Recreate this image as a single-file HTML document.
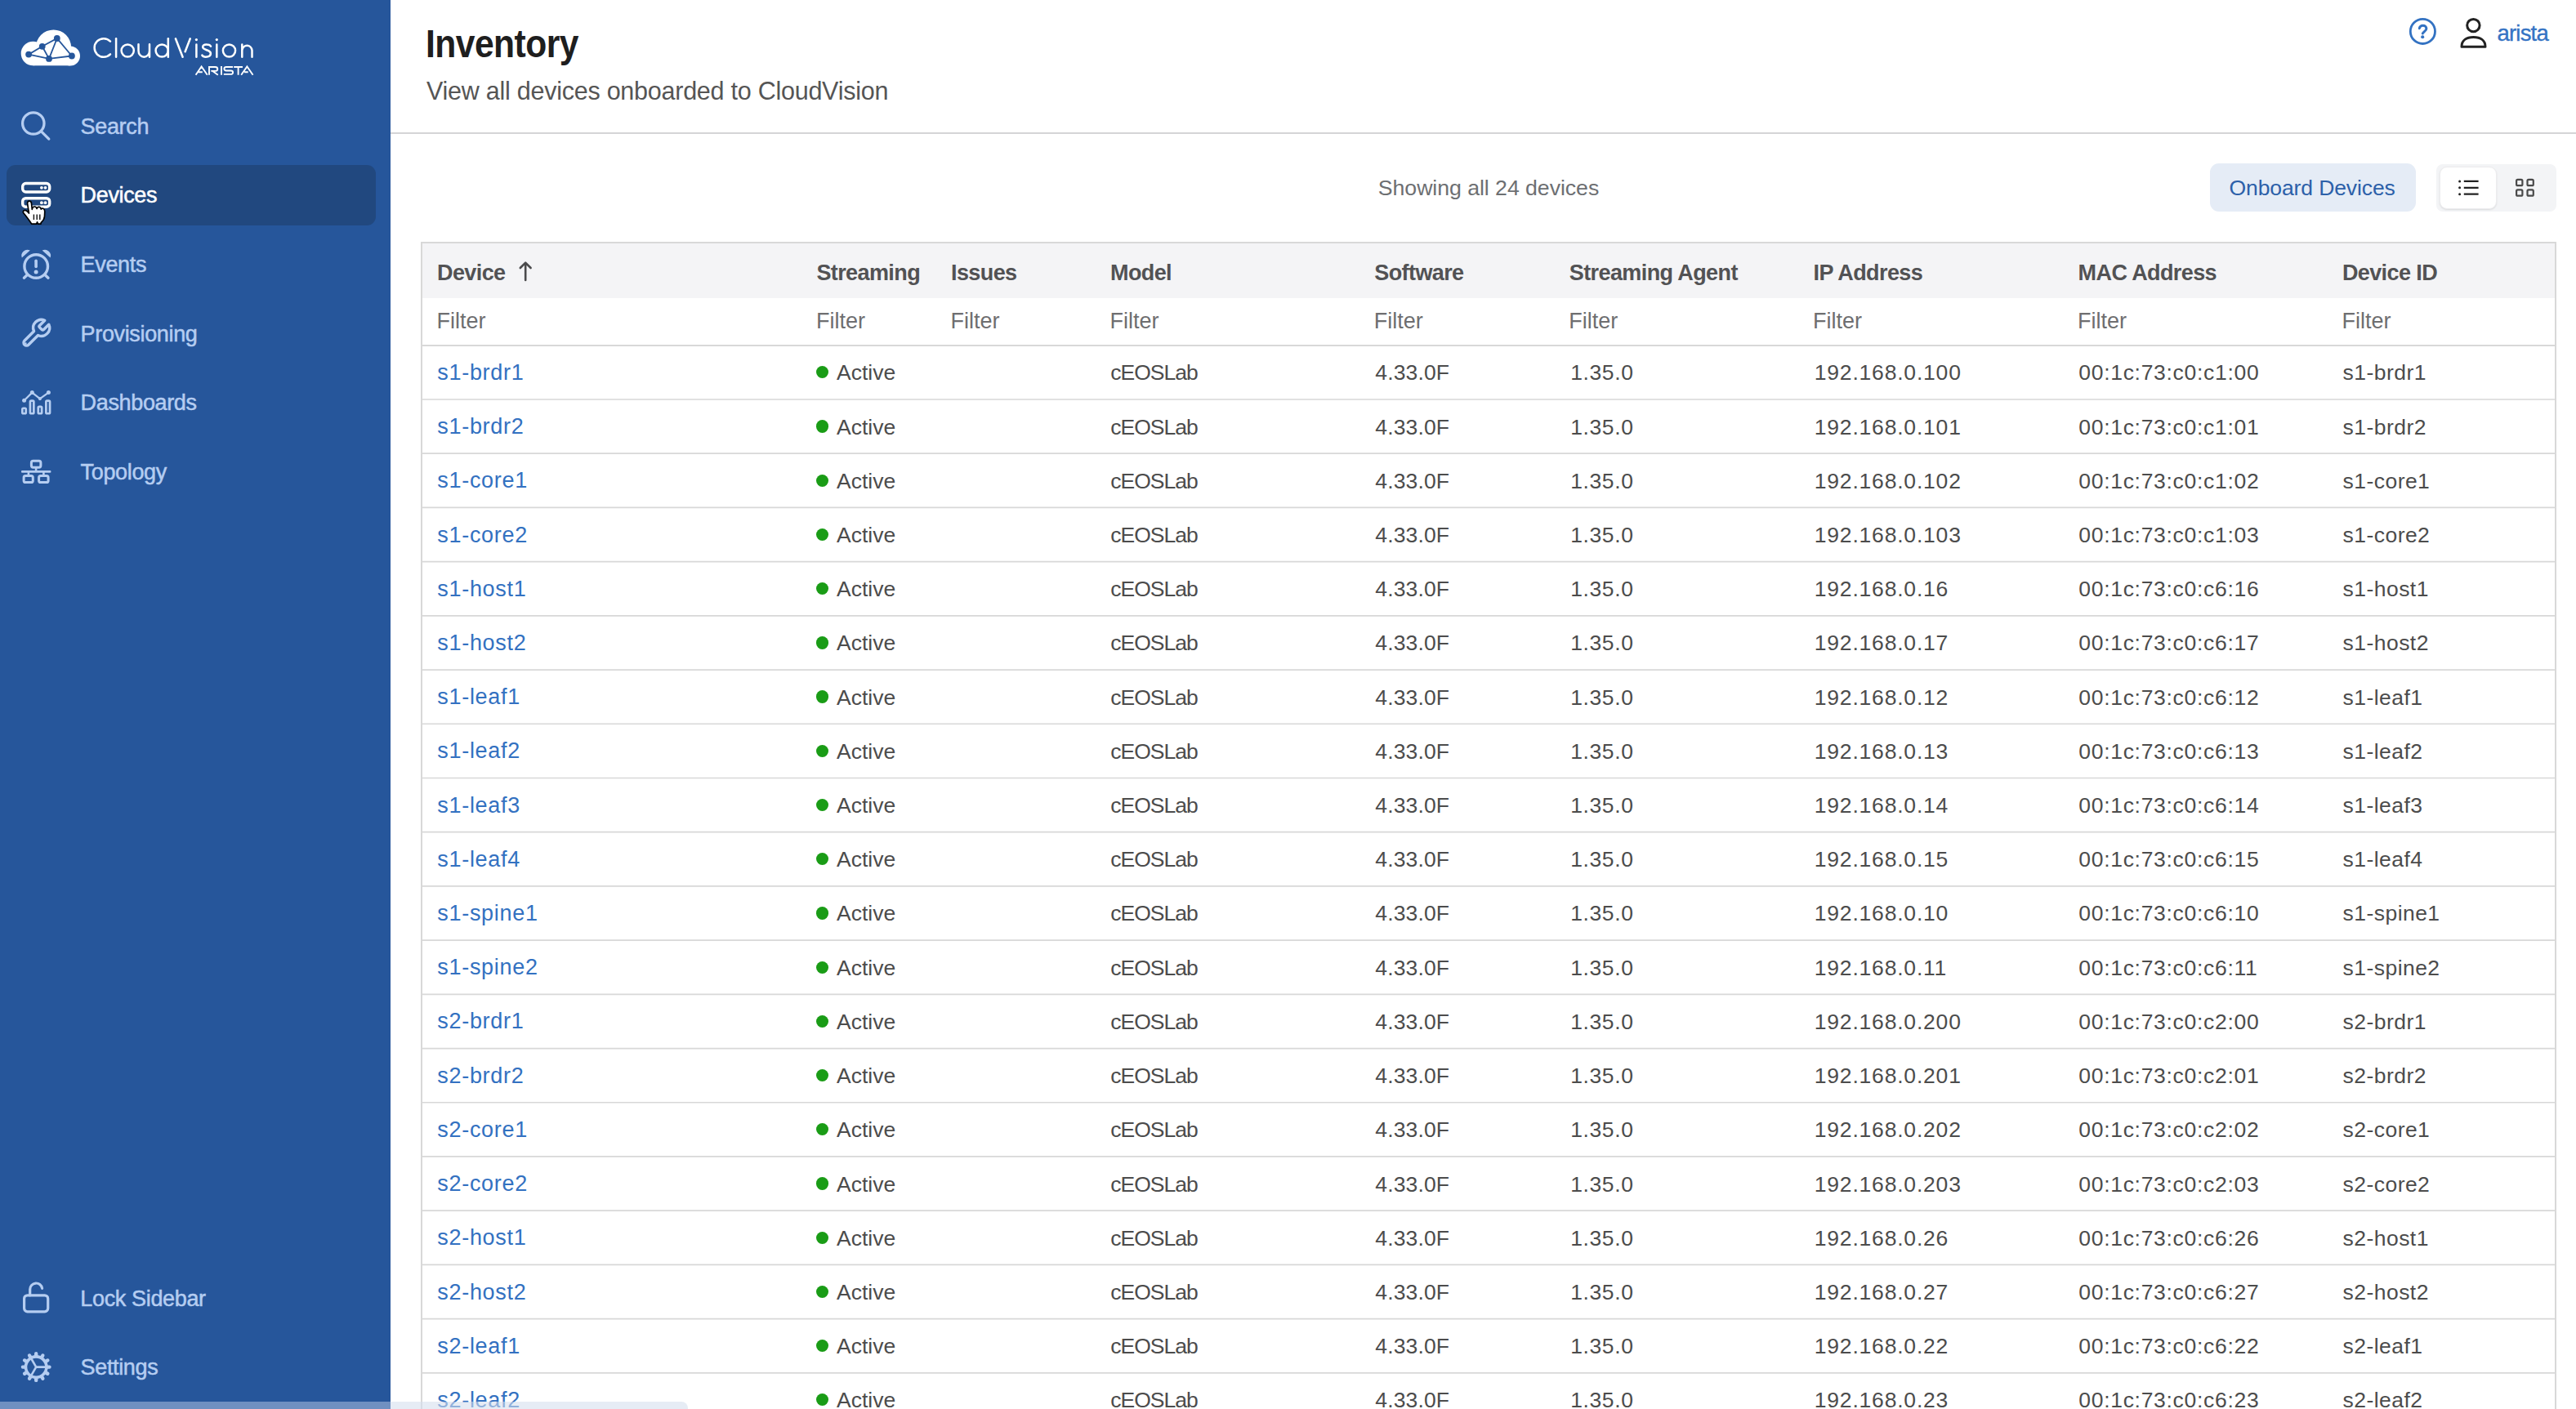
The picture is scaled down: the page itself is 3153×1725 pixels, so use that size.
<!DOCTYPE html><html><head><meta charset="utf-8"><title>Inventory</title><style>
html,body{margin:0;padding:0;width:3153px;height:1725px;overflow:hidden;background:#fff;font-family:"Liberation Sans",sans-serif;}
.a{position:absolute;white-space:nowrap;line-height:1;}
.r{position:absolute;}
svg{position:absolute;overflow:visible;}
</style></head><body>
<div class="r" style="left:0;top:0;width:478px;height:1725px;background:#26569b"></div>
<div class="r" style="left:7.5px;top:202px;width:452.5px;height:74px;border-radius:11px;background:#21487f"></div>
<div class="a" style="left:98.60px;top:142.04px;font-size:27px;color:#b5cdf1;letter-spacing:-0.35px;-webkit-text-stroke:0.5px #b5cdf1;">Search</div>
<div class="a" style="left:98.60px;top:226.34px;font-size:27px;color:#ffffff;letter-spacing:-0.35px;-webkit-text-stroke:0.5px #ffffff;">Devices</div>
<div class="a" style="left:98.60px;top:310.94px;font-size:27px;color:#b5cdf1;letter-spacing:-0.35px;-webkit-text-stroke:0.5px #b5cdf1;">Events</div>
<div class="a" style="left:98.60px;top:396.04px;font-size:27px;color:#b5cdf1;letter-spacing:-0.35px;-webkit-text-stroke:0.5px #b5cdf1;">Provisioning</div>
<div class="a" style="left:98.60px;top:479.94px;font-size:27px;color:#b5cdf1;letter-spacing:-0.35px;-webkit-text-stroke:0.5px #b5cdf1;">Dashboards</div>
<div class="a" style="left:98.60px;top:565.14px;font-size:27px;color:#b5cdf1;letter-spacing:-0.35px;-webkit-text-stroke:0.5px #b5cdf1;">Topology</div>
<div class="a" style="left:98.30px;top:1576.94px;font-size:27px;color:#b5cdf1;letter-spacing:-0.35px;-webkit-text-stroke:0.5px #b5cdf1;">Lock Sidebar</div>
<div class="a" style="left:98.60px;top:1660.94px;font-size:27px;color:#b5cdf1;letter-spacing:-0.35px;-webkit-text-stroke:0.5px #b5cdf1;">Settings</div>
<div class="a" style="left:520.50px;top:30.09px;font-size:47.5px;color:#1e1e1e;font-weight:700;letter-spacing:-0.6px;transform:scaleX(0.897);transform-origin:0 0;">Inventory</div>
<div class="a" style="left:522.00px;top:95.78px;font-size:30.5px;color:#555555;letter-spacing:-0.25px;">View all devices onboarded to CloudVision</div>
<div class="r" style="left:478px;top:162px;width:2675px;height:1.5px;background:#d4d4d6"></div>
<div class="a" style="left:3056.50px;top:27.02px;font-size:27.5px;color:#3473c4;letter-spacing:-0.8px;-webkit-text-stroke:0.35px #3473c4;">arista</div>
<div class="a" style="left:1686.80px;top:217.20px;font-size:26.7px;color:#6d6f72;letter-spacing:-0.05px;">Showing all 24 devices</div>
<div class="r" style="left:2704.5px;top:200px;width:252px;height:59px;border-radius:11px;background:#e5ecf6"></div>
<div class="a" style="left:2728.50px;top:216.87px;font-size:26.5px;color:#2c60a9;letter-spacing:-0.1px;">Onboard Devices</div>
<div class="r" style="left:2982px;top:201px;width:146.5px;height:58px;border-radius:8px;background:#f3f4f6"></div>
<div class="r" style="left:2985.5px;top:203.5px;width:70px;height:52px;border-radius:9px;background:#fff;box-sizing:border-box;border:1px solid #ececee;box-shadow:0 1px 2px rgba(0,0,0,0.10)"></div>
<div class="r" style="left:515px;top:296px;width:2614px;height:1439px;border:2px solid #d8d8d8;box-sizing:border-box;border-bottom:none"></div>
<div class="r" style="left:517px;top:298px;width:2610px;height:66.60000000000002px;background:#f4f4f6"></div>
<div class="a" style="left:535.00px;top:320.74px;font-size:27px;color:#525254;font-weight:700;letter-spacing:-0.6px;">Device</div>
<div class="a" style="left:999.40px;top:320.74px;font-size:27px;color:#525254;font-weight:700;letter-spacing:-0.6px;">Streaming</div>
<div class="a" style="left:1164.00px;top:320.74px;font-size:27px;color:#525254;font-weight:700;letter-spacing:-0.6px;">Issues</div>
<div class="a" style="left:1359.00px;top:320.74px;font-size:27px;color:#525254;font-weight:700;letter-spacing:-0.6px;">Model</div>
<div class="a" style="left:1682.30px;top:320.74px;font-size:27px;color:#525254;font-weight:700;letter-spacing:-0.6px;">Software</div>
<div class="a" style="left:1920.80px;top:320.74px;font-size:27px;color:#525254;font-weight:700;letter-spacing:-0.6px;">Streaming Agent</div>
<div class="a" style="left:2219.60px;top:320.74px;font-size:27px;color:#525254;font-weight:700;letter-spacing:-0.6px;">IP Address</div>
<div class="a" style="left:2543.60px;top:320.74px;font-size:27px;color:#525254;font-weight:700;letter-spacing:-0.6px;">MAC Address</div>
<div class="a" style="left:2866.90px;top:320.74px;font-size:27px;color:#525254;font-weight:700;letter-spacing:-0.6px;">Device ID</div>
<div class="a" style="left:534.50px;top:380.44px;font-size:27px;color:#6e6e70;">Filter</div>
<div class="a" style="left:998.90px;top:380.44px;font-size:27px;color:#6e6e70;">Filter</div>
<div class="a" style="left:1163.50px;top:380.44px;font-size:27px;color:#6e6e70;">Filter</div>
<div class="a" style="left:1358.50px;top:380.44px;font-size:27px;color:#6e6e70;">Filter</div>
<div class="a" style="left:1681.80px;top:380.44px;font-size:27px;color:#6e6e70;">Filter</div>
<div class="a" style="left:1920.30px;top:380.44px;font-size:27px;color:#6e6e70;">Filter</div>
<div class="a" style="left:2219.10px;top:380.44px;font-size:27px;color:#6e6e70;">Filter</div>
<div class="a" style="left:2543.10px;top:380.44px;font-size:27px;color:#6e6e70;">Filter</div>
<div class="a" style="left:2866.40px;top:380.44px;font-size:27px;color:#6e6e70;">Filter</div>
<div class="r" style="left:515px;top:421.8px;width:2614px;height:2px;background:#d8d8d8"></div>
<div class="a" style="left:535.30px;top:442.94px;font-size:27px;color:#3371c1;letter-spacing:0.7px;">s1-brdr1</div>
<div class="r" style="left:999px;top:448.20px;width:15.3px;height:15.3px;border-radius:50%;background:#1a9c16"></div>
<div class="a" style="left:1024.00px;top:443.37px;font-size:26.5px;color:#4c4c4c;">Active</div>
<div class="a" style="left:1359.30px;top:443.37px;font-size:26.5px;color:#4c4c4c;letter-spacing:-1px;">cEOSLab</div>
<div class="a" style="left:1683.30px;top:443.37px;font-size:26.5px;color:#4c4c4c;letter-spacing:0.15px;">4.33.0F</div>
<div class="a" style="left:1922.20px;top:443.37px;font-size:26.5px;color:#4c4c4c;letter-spacing:0.6px;">1.35.0</div>
<div class="a" style="left:2220.80px;top:443.37px;font-size:26.5px;color:#4c4c4c;letter-spacing:0.8px;">192.168.0.100</div>
<div class="a" style="left:2544.30px;top:443.37px;font-size:26.5px;color:#4c4c4c;letter-spacing:0.7px;">00:1c:73:c0:c1:00</div>
<div class="a" style="left:2867.60px;top:443.37px;font-size:26.5px;color:#4c4c4c;letter-spacing:0.45px;">s1-brdr1</div>
<div class="a" style="left:535.30px;top:509.15px;font-size:27px;color:#3371c1;letter-spacing:0.7px;">s1-brdr2</div>
<div class="r" style="left:999px;top:514.41px;width:15.3px;height:15.3px;border-radius:50%;background:#1a9c16"></div>
<div class="a" style="left:1024.00px;top:509.58px;font-size:26.5px;color:#4c4c4c;">Active</div>
<div class="a" style="left:1359.30px;top:509.58px;font-size:26.5px;color:#4c4c4c;letter-spacing:-1px;">cEOSLab</div>
<div class="a" style="left:1683.30px;top:509.58px;font-size:26.5px;color:#4c4c4c;letter-spacing:0.15px;">4.33.0F</div>
<div class="a" style="left:1922.20px;top:509.58px;font-size:26.5px;color:#4c4c4c;letter-spacing:0.6px;">1.35.0</div>
<div class="a" style="left:2220.80px;top:509.58px;font-size:26.5px;color:#4c4c4c;letter-spacing:0.8px;">192.168.0.101</div>
<div class="a" style="left:2544.30px;top:509.58px;font-size:26.5px;color:#4c4c4c;letter-spacing:0.7px;">00:1c:73:c0:c1:01</div>
<div class="a" style="left:2867.60px;top:509.58px;font-size:26.5px;color:#4c4c4c;letter-spacing:0.45px;">s1-brdr2</div>
<div class="a" style="left:535.30px;top:575.36px;font-size:27px;color:#3371c1;letter-spacing:0.7px;">s1-core1</div>
<div class="r" style="left:999px;top:580.62px;width:15.3px;height:15.3px;border-radius:50%;background:#1a9c16"></div>
<div class="a" style="left:1024.00px;top:575.79px;font-size:26.5px;color:#4c4c4c;">Active</div>
<div class="a" style="left:1359.30px;top:575.79px;font-size:26.5px;color:#4c4c4c;letter-spacing:-1px;">cEOSLab</div>
<div class="a" style="left:1683.30px;top:575.79px;font-size:26.5px;color:#4c4c4c;letter-spacing:0.15px;">4.33.0F</div>
<div class="a" style="left:1922.20px;top:575.79px;font-size:26.5px;color:#4c4c4c;letter-spacing:0.6px;">1.35.0</div>
<div class="a" style="left:2220.80px;top:575.79px;font-size:26.5px;color:#4c4c4c;letter-spacing:0.8px;">192.168.0.102</div>
<div class="a" style="left:2544.30px;top:575.79px;font-size:26.5px;color:#4c4c4c;letter-spacing:0.7px;">00:1c:73:c0:c1:02</div>
<div class="a" style="left:2867.60px;top:575.79px;font-size:26.5px;color:#4c4c4c;letter-spacing:0.45px;">s1-core1</div>
<div class="a" style="left:535.30px;top:641.57px;font-size:27px;color:#3371c1;letter-spacing:0.7px;">s1-core2</div>
<div class="r" style="left:999px;top:646.83px;width:15.3px;height:15.3px;border-radius:50%;background:#1a9c16"></div>
<div class="a" style="left:1024.00px;top:642.00px;font-size:26.5px;color:#4c4c4c;">Active</div>
<div class="a" style="left:1359.30px;top:642.00px;font-size:26.5px;color:#4c4c4c;letter-spacing:-1px;">cEOSLab</div>
<div class="a" style="left:1683.30px;top:642.00px;font-size:26.5px;color:#4c4c4c;letter-spacing:0.15px;">4.33.0F</div>
<div class="a" style="left:1922.20px;top:642.00px;font-size:26.5px;color:#4c4c4c;letter-spacing:0.6px;">1.35.0</div>
<div class="a" style="left:2220.80px;top:642.00px;font-size:26.5px;color:#4c4c4c;letter-spacing:0.8px;">192.168.0.103</div>
<div class="a" style="left:2544.30px;top:642.00px;font-size:26.5px;color:#4c4c4c;letter-spacing:0.7px;">00:1c:73:c0:c1:03</div>
<div class="a" style="left:2867.60px;top:642.00px;font-size:26.5px;color:#4c4c4c;letter-spacing:0.45px;">s1-core2</div>
<div class="a" style="left:535.30px;top:707.78px;font-size:27px;color:#3371c1;letter-spacing:0.7px;">s1-host1</div>
<div class="r" style="left:999px;top:713.04px;width:15.3px;height:15.3px;border-radius:50%;background:#1a9c16"></div>
<div class="a" style="left:1024.00px;top:708.21px;font-size:26.5px;color:#4c4c4c;">Active</div>
<div class="a" style="left:1359.30px;top:708.21px;font-size:26.5px;color:#4c4c4c;letter-spacing:-1px;">cEOSLab</div>
<div class="a" style="left:1683.30px;top:708.21px;font-size:26.5px;color:#4c4c4c;letter-spacing:0.15px;">4.33.0F</div>
<div class="a" style="left:1922.20px;top:708.21px;font-size:26.5px;color:#4c4c4c;letter-spacing:0.6px;">1.35.0</div>
<div class="a" style="left:2220.80px;top:708.21px;font-size:26.5px;color:#4c4c4c;letter-spacing:0.8px;">192.168.0.16</div>
<div class="a" style="left:2544.30px;top:708.21px;font-size:26.5px;color:#4c4c4c;letter-spacing:0.7px;">00:1c:73:c0:c6:16</div>
<div class="a" style="left:2867.60px;top:708.21px;font-size:26.5px;color:#4c4c4c;letter-spacing:0.45px;">s1-host1</div>
<div class="a" style="left:535.30px;top:773.99px;font-size:27px;color:#3371c1;letter-spacing:0.7px;">s1-host2</div>
<div class="r" style="left:999px;top:779.25px;width:15.3px;height:15.3px;border-radius:50%;background:#1a9c16"></div>
<div class="a" style="left:1024.00px;top:774.42px;font-size:26.5px;color:#4c4c4c;">Active</div>
<div class="a" style="left:1359.30px;top:774.42px;font-size:26.5px;color:#4c4c4c;letter-spacing:-1px;">cEOSLab</div>
<div class="a" style="left:1683.30px;top:774.42px;font-size:26.5px;color:#4c4c4c;letter-spacing:0.15px;">4.33.0F</div>
<div class="a" style="left:1922.20px;top:774.42px;font-size:26.5px;color:#4c4c4c;letter-spacing:0.6px;">1.35.0</div>
<div class="a" style="left:2220.80px;top:774.42px;font-size:26.5px;color:#4c4c4c;letter-spacing:0.8px;">192.168.0.17</div>
<div class="a" style="left:2544.30px;top:774.42px;font-size:26.5px;color:#4c4c4c;letter-spacing:0.7px;">00:1c:73:c0:c6:17</div>
<div class="a" style="left:2867.60px;top:774.42px;font-size:26.5px;color:#4c4c4c;letter-spacing:0.45px;">s1-host2</div>
<div class="a" style="left:535.30px;top:840.20px;font-size:27px;color:#3371c1;letter-spacing:0.7px;">s1-leaf1</div>
<div class="r" style="left:999px;top:845.46px;width:15.3px;height:15.3px;border-radius:50%;background:#1a9c16"></div>
<div class="a" style="left:1024.00px;top:840.63px;font-size:26.5px;color:#4c4c4c;">Active</div>
<div class="a" style="left:1359.30px;top:840.63px;font-size:26.5px;color:#4c4c4c;letter-spacing:-1px;">cEOSLab</div>
<div class="a" style="left:1683.30px;top:840.63px;font-size:26.5px;color:#4c4c4c;letter-spacing:0.15px;">4.33.0F</div>
<div class="a" style="left:1922.20px;top:840.63px;font-size:26.5px;color:#4c4c4c;letter-spacing:0.6px;">1.35.0</div>
<div class="a" style="left:2220.80px;top:840.63px;font-size:26.5px;color:#4c4c4c;letter-spacing:0.8px;">192.168.0.12</div>
<div class="a" style="left:2544.30px;top:840.63px;font-size:26.5px;color:#4c4c4c;letter-spacing:0.7px;">00:1c:73:c0:c6:12</div>
<div class="a" style="left:2867.60px;top:840.63px;font-size:26.5px;color:#4c4c4c;letter-spacing:0.45px;">s1-leaf1</div>
<div class="a" style="left:535.30px;top:906.41px;font-size:27px;color:#3371c1;letter-spacing:0.7px;">s1-leaf2</div>
<div class="r" style="left:999px;top:911.67px;width:15.3px;height:15.3px;border-radius:50%;background:#1a9c16"></div>
<div class="a" style="left:1024.00px;top:906.84px;font-size:26.5px;color:#4c4c4c;">Active</div>
<div class="a" style="left:1359.30px;top:906.84px;font-size:26.5px;color:#4c4c4c;letter-spacing:-1px;">cEOSLab</div>
<div class="a" style="left:1683.30px;top:906.84px;font-size:26.5px;color:#4c4c4c;letter-spacing:0.15px;">4.33.0F</div>
<div class="a" style="left:1922.20px;top:906.84px;font-size:26.5px;color:#4c4c4c;letter-spacing:0.6px;">1.35.0</div>
<div class="a" style="left:2220.80px;top:906.84px;font-size:26.5px;color:#4c4c4c;letter-spacing:0.8px;">192.168.0.13</div>
<div class="a" style="left:2544.30px;top:906.84px;font-size:26.5px;color:#4c4c4c;letter-spacing:0.7px;">00:1c:73:c0:c6:13</div>
<div class="a" style="left:2867.60px;top:906.84px;font-size:26.5px;color:#4c4c4c;letter-spacing:0.45px;">s1-leaf2</div>
<div class="a" style="left:535.30px;top:972.62px;font-size:27px;color:#3371c1;letter-spacing:0.7px;">s1-leaf3</div>
<div class="r" style="left:999px;top:977.88px;width:15.3px;height:15.3px;border-radius:50%;background:#1a9c16"></div>
<div class="a" style="left:1024.00px;top:973.05px;font-size:26.5px;color:#4c4c4c;">Active</div>
<div class="a" style="left:1359.30px;top:973.05px;font-size:26.5px;color:#4c4c4c;letter-spacing:-1px;">cEOSLab</div>
<div class="a" style="left:1683.30px;top:973.05px;font-size:26.5px;color:#4c4c4c;letter-spacing:0.15px;">4.33.0F</div>
<div class="a" style="left:1922.20px;top:973.05px;font-size:26.5px;color:#4c4c4c;letter-spacing:0.6px;">1.35.0</div>
<div class="a" style="left:2220.80px;top:973.05px;font-size:26.5px;color:#4c4c4c;letter-spacing:0.8px;">192.168.0.14</div>
<div class="a" style="left:2544.30px;top:973.05px;font-size:26.5px;color:#4c4c4c;letter-spacing:0.7px;">00:1c:73:c0:c6:14</div>
<div class="a" style="left:2867.60px;top:973.05px;font-size:26.5px;color:#4c4c4c;letter-spacing:0.45px;">s1-leaf3</div>
<div class="a" style="left:535.30px;top:1038.83px;font-size:27px;color:#3371c1;letter-spacing:0.7px;">s1-leaf4</div>
<div class="r" style="left:999px;top:1044.09px;width:15.3px;height:15.3px;border-radius:50%;background:#1a9c16"></div>
<div class="a" style="left:1024.00px;top:1039.26px;font-size:26.5px;color:#4c4c4c;">Active</div>
<div class="a" style="left:1359.30px;top:1039.26px;font-size:26.5px;color:#4c4c4c;letter-spacing:-1px;">cEOSLab</div>
<div class="a" style="left:1683.30px;top:1039.26px;font-size:26.5px;color:#4c4c4c;letter-spacing:0.15px;">4.33.0F</div>
<div class="a" style="left:1922.20px;top:1039.26px;font-size:26.5px;color:#4c4c4c;letter-spacing:0.6px;">1.35.0</div>
<div class="a" style="left:2220.80px;top:1039.26px;font-size:26.5px;color:#4c4c4c;letter-spacing:0.8px;">192.168.0.15</div>
<div class="a" style="left:2544.30px;top:1039.26px;font-size:26.5px;color:#4c4c4c;letter-spacing:0.7px;">00:1c:73:c0:c6:15</div>
<div class="a" style="left:2867.60px;top:1039.26px;font-size:26.5px;color:#4c4c4c;letter-spacing:0.45px;">s1-leaf4</div>
<div class="a" style="left:535.30px;top:1105.04px;font-size:27px;color:#3371c1;letter-spacing:0.7px;">s1-spine1</div>
<div class="r" style="left:999px;top:1110.30px;width:15.3px;height:15.3px;border-radius:50%;background:#1a9c16"></div>
<div class="a" style="left:1024.00px;top:1105.47px;font-size:26.5px;color:#4c4c4c;">Active</div>
<div class="a" style="left:1359.30px;top:1105.47px;font-size:26.5px;color:#4c4c4c;letter-spacing:-1px;">cEOSLab</div>
<div class="a" style="left:1683.30px;top:1105.47px;font-size:26.5px;color:#4c4c4c;letter-spacing:0.15px;">4.33.0F</div>
<div class="a" style="left:1922.20px;top:1105.47px;font-size:26.5px;color:#4c4c4c;letter-spacing:0.6px;">1.35.0</div>
<div class="a" style="left:2220.80px;top:1105.47px;font-size:26.5px;color:#4c4c4c;letter-spacing:0.8px;">192.168.0.10</div>
<div class="a" style="left:2544.30px;top:1105.47px;font-size:26.5px;color:#4c4c4c;letter-spacing:0.7px;">00:1c:73:c0:c6:10</div>
<div class="a" style="left:2867.60px;top:1105.47px;font-size:26.5px;color:#4c4c4c;letter-spacing:0.45px;">s1-spine1</div>
<div class="a" style="left:535.30px;top:1171.25px;font-size:27px;color:#3371c1;letter-spacing:0.7px;">s1-spine2</div>
<div class="r" style="left:999px;top:1176.51px;width:15.3px;height:15.3px;border-radius:50%;background:#1a9c16"></div>
<div class="a" style="left:1024.00px;top:1171.68px;font-size:26.5px;color:#4c4c4c;">Active</div>
<div class="a" style="left:1359.30px;top:1171.68px;font-size:26.5px;color:#4c4c4c;letter-spacing:-1px;">cEOSLab</div>
<div class="a" style="left:1683.30px;top:1171.68px;font-size:26.5px;color:#4c4c4c;letter-spacing:0.15px;">4.33.0F</div>
<div class="a" style="left:1922.20px;top:1171.68px;font-size:26.5px;color:#4c4c4c;letter-spacing:0.6px;">1.35.0</div>
<div class="a" style="left:2220.80px;top:1171.68px;font-size:26.5px;color:#4c4c4c;letter-spacing:0.8px;">192.168.0.11</div>
<div class="a" style="left:2544.30px;top:1171.68px;font-size:26.5px;color:#4c4c4c;letter-spacing:0.7px;">00:1c:73:c0:c6:11</div>
<div class="a" style="left:2867.60px;top:1171.68px;font-size:26.5px;color:#4c4c4c;letter-spacing:0.45px;">s1-spine2</div>
<div class="a" style="left:535.30px;top:1237.46px;font-size:27px;color:#3371c1;letter-spacing:0.7px;">s2-brdr1</div>
<div class="r" style="left:999px;top:1242.72px;width:15.3px;height:15.3px;border-radius:50%;background:#1a9c16"></div>
<div class="a" style="left:1024.00px;top:1237.89px;font-size:26.5px;color:#4c4c4c;">Active</div>
<div class="a" style="left:1359.30px;top:1237.89px;font-size:26.5px;color:#4c4c4c;letter-spacing:-1px;">cEOSLab</div>
<div class="a" style="left:1683.30px;top:1237.89px;font-size:26.5px;color:#4c4c4c;letter-spacing:0.15px;">4.33.0F</div>
<div class="a" style="left:1922.20px;top:1237.89px;font-size:26.5px;color:#4c4c4c;letter-spacing:0.6px;">1.35.0</div>
<div class="a" style="left:2220.80px;top:1237.89px;font-size:26.5px;color:#4c4c4c;letter-spacing:0.8px;">192.168.0.200</div>
<div class="a" style="left:2544.30px;top:1237.89px;font-size:26.5px;color:#4c4c4c;letter-spacing:0.7px;">00:1c:73:c0:c2:00</div>
<div class="a" style="left:2867.60px;top:1237.89px;font-size:26.5px;color:#4c4c4c;letter-spacing:0.45px;">s2-brdr1</div>
<div class="a" style="left:535.30px;top:1303.67px;font-size:27px;color:#3371c1;letter-spacing:0.7px;">s2-brdr2</div>
<div class="r" style="left:999px;top:1308.93px;width:15.3px;height:15.3px;border-radius:50%;background:#1a9c16"></div>
<div class="a" style="left:1024.00px;top:1304.10px;font-size:26.5px;color:#4c4c4c;">Active</div>
<div class="a" style="left:1359.30px;top:1304.10px;font-size:26.5px;color:#4c4c4c;letter-spacing:-1px;">cEOSLab</div>
<div class="a" style="left:1683.30px;top:1304.10px;font-size:26.5px;color:#4c4c4c;letter-spacing:0.15px;">4.33.0F</div>
<div class="a" style="left:1922.20px;top:1304.10px;font-size:26.5px;color:#4c4c4c;letter-spacing:0.6px;">1.35.0</div>
<div class="a" style="left:2220.80px;top:1304.10px;font-size:26.5px;color:#4c4c4c;letter-spacing:0.8px;">192.168.0.201</div>
<div class="a" style="left:2544.30px;top:1304.10px;font-size:26.5px;color:#4c4c4c;letter-spacing:0.7px;">00:1c:73:c0:c2:01</div>
<div class="a" style="left:2867.60px;top:1304.10px;font-size:26.5px;color:#4c4c4c;letter-spacing:0.45px;">s2-brdr2</div>
<div class="a" style="left:535.30px;top:1369.88px;font-size:27px;color:#3371c1;letter-spacing:0.7px;">s2-core1</div>
<div class="r" style="left:999px;top:1375.14px;width:15.3px;height:15.3px;border-radius:50%;background:#1a9c16"></div>
<div class="a" style="left:1024.00px;top:1370.31px;font-size:26.5px;color:#4c4c4c;">Active</div>
<div class="a" style="left:1359.30px;top:1370.31px;font-size:26.5px;color:#4c4c4c;letter-spacing:-1px;">cEOSLab</div>
<div class="a" style="left:1683.30px;top:1370.31px;font-size:26.5px;color:#4c4c4c;letter-spacing:0.15px;">4.33.0F</div>
<div class="a" style="left:1922.20px;top:1370.31px;font-size:26.5px;color:#4c4c4c;letter-spacing:0.6px;">1.35.0</div>
<div class="a" style="left:2220.80px;top:1370.31px;font-size:26.5px;color:#4c4c4c;letter-spacing:0.8px;">192.168.0.202</div>
<div class="a" style="left:2544.30px;top:1370.31px;font-size:26.5px;color:#4c4c4c;letter-spacing:0.7px;">00:1c:73:c0:c2:02</div>
<div class="a" style="left:2867.60px;top:1370.31px;font-size:26.5px;color:#4c4c4c;letter-spacing:0.45px;">s2-core1</div>
<div class="a" style="left:535.30px;top:1436.09px;font-size:27px;color:#3371c1;letter-spacing:0.7px;">s2-core2</div>
<div class="r" style="left:999px;top:1441.35px;width:15.3px;height:15.3px;border-radius:50%;background:#1a9c16"></div>
<div class="a" style="left:1024.00px;top:1436.52px;font-size:26.5px;color:#4c4c4c;">Active</div>
<div class="a" style="left:1359.30px;top:1436.52px;font-size:26.5px;color:#4c4c4c;letter-spacing:-1px;">cEOSLab</div>
<div class="a" style="left:1683.30px;top:1436.52px;font-size:26.5px;color:#4c4c4c;letter-spacing:0.15px;">4.33.0F</div>
<div class="a" style="left:1922.20px;top:1436.52px;font-size:26.5px;color:#4c4c4c;letter-spacing:0.6px;">1.35.0</div>
<div class="a" style="left:2220.80px;top:1436.52px;font-size:26.5px;color:#4c4c4c;letter-spacing:0.8px;">192.168.0.203</div>
<div class="a" style="left:2544.30px;top:1436.52px;font-size:26.5px;color:#4c4c4c;letter-spacing:0.7px;">00:1c:73:c0:c2:03</div>
<div class="a" style="left:2867.60px;top:1436.52px;font-size:26.5px;color:#4c4c4c;letter-spacing:0.45px;">s2-core2</div>
<div class="a" style="left:535.30px;top:1502.30px;font-size:27px;color:#3371c1;letter-spacing:0.7px;">s2-host1</div>
<div class="r" style="left:999px;top:1507.56px;width:15.3px;height:15.3px;border-radius:50%;background:#1a9c16"></div>
<div class="a" style="left:1024.00px;top:1502.73px;font-size:26.5px;color:#4c4c4c;">Active</div>
<div class="a" style="left:1359.30px;top:1502.73px;font-size:26.5px;color:#4c4c4c;letter-spacing:-1px;">cEOSLab</div>
<div class="a" style="left:1683.30px;top:1502.73px;font-size:26.5px;color:#4c4c4c;letter-spacing:0.15px;">4.33.0F</div>
<div class="a" style="left:1922.20px;top:1502.73px;font-size:26.5px;color:#4c4c4c;letter-spacing:0.6px;">1.35.0</div>
<div class="a" style="left:2220.80px;top:1502.73px;font-size:26.5px;color:#4c4c4c;letter-spacing:0.8px;">192.168.0.26</div>
<div class="a" style="left:2544.30px;top:1502.73px;font-size:26.5px;color:#4c4c4c;letter-spacing:0.7px;">00:1c:73:c0:c6:26</div>
<div class="a" style="left:2867.60px;top:1502.73px;font-size:26.5px;color:#4c4c4c;letter-spacing:0.45px;">s2-host1</div>
<div class="a" style="left:535.30px;top:1568.51px;font-size:27px;color:#3371c1;letter-spacing:0.7px;">s2-host2</div>
<div class="r" style="left:999px;top:1573.77px;width:15.3px;height:15.3px;border-radius:50%;background:#1a9c16"></div>
<div class="a" style="left:1024.00px;top:1568.94px;font-size:26.5px;color:#4c4c4c;">Active</div>
<div class="a" style="left:1359.30px;top:1568.94px;font-size:26.5px;color:#4c4c4c;letter-spacing:-1px;">cEOSLab</div>
<div class="a" style="left:1683.30px;top:1568.94px;font-size:26.5px;color:#4c4c4c;letter-spacing:0.15px;">4.33.0F</div>
<div class="a" style="left:1922.20px;top:1568.94px;font-size:26.5px;color:#4c4c4c;letter-spacing:0.6px;">1.35.0</div>
<div class="a" style="left:2220.80px;top:1568.94px;font-size:26.5px;color:#4c4c4c;letter-spacing:0.8px;">192.168.0.27</div>
<div class="a" style="left:2544.30px;top:1568.94px;font-size:26.5px;color:#4c4c4c;letter-spacing:0.7px;">00:1c:73:c0:c6:27</div>
<div class="a" style="left:2867.60px;top:1568.94px;font-size:26.5px;color:#4c4c4c;letter-spacing:0.45px;">s2-host2</div>
<div class="a" style="left:535.30px;top:1634.72px;font-size:27px;color:#3371c1;letter-spacing:0.7px;">s2-leaf1</div>
<div class="r" style="left:999px;top:1639.98px;width:15.3px;height:15.3px;border-radius:50%;background:#1a9c16"></div>
<div class="a" style="left:1024.00px;top:1635.15px;font-size:26.5px;color:#4c4c4c;">Active</div>
<div class="a" style="left:1359.30px;top:1635.15px;font-size:26.5px;color:#4c4c4c;letter-spacing:-1px;">cEOSLab</div>
<div class="a" style="left:1683.30px;top:1635.15px;font-size:26.5px;color:#4c4c4c;letter-spacing:0.15px;">4.33.0F</div>
<div class="a" style="left:1922.20px;top:1635.15px;font-size:26.5px;color:#4c4c4c;letter-spacing:0.6px;">1.35.0</div>
<div class="a" style="left:2220.80px;top:1635.15px;font-size:26.5px;color:#4c4c4c;letter-spacing:0.8px;">192.168.0.22</div>
<div class="a" style="left:2544.30px;top:1635.15px;font-size:26.5px;color:#4c4c4c;letter-spacing:0.7px;">00:1c:73:c0:c6:22</div>
<div class="a" style="left:2867.60px;top:1635.15px;font-size:26.5px;color:#4c4c4c;letter-spacing:0.45px;">s2-leaf1</div>
<div class="a" style="left:535.30px;top:1700.93px;font-size:27px;color:#3371c1;letter-spacing:0.7px;">s2-leaf2</div>
<div class="r" style="left:999px;top:1706.19px;width:15.3px;height:15.3px;border-radius:50%;background:#1a9c16"></div>
<div class="a" style="left:1024.00px;top:1701.36px;font-size:26.5px;color:#4c4c4c;">Active</div>
<div class="a" style="left:1359.30px;top:1701.36px;font-size:26.5px;color:#4c4c4c;letter-spacing:-1px;">cEOSLab</div>
<div class="a" style="left:1683.30px;top:1701.36px;font-size:26.5px;color:#4c4c4c;letter-spacing:0.15px;">4.33.0F</div>
<div class="a" style="left:1922.20px;top:1701.36px;font-size:26.5px;color:#4c4c4c;letter-spacing:0.6px;">1.35.0</div>
<div class="a" style="left:2220.80px;top:1701.36px;font-size:26.5px;color:#4c4c4c;letter-spacing:0.8px;">192.168.0.23</div>
<div class="a" style="left:2544.30px;top:1701.36px;font-size:26.5px;color:#4c4c4c;letter-spacing:0.7px;">00:1c:73:c0:c6:23</div>
<div class="a" style="left:2867.60px;top:1701.36px;font-size:26.5px;color:#4c4c4c;letter-spacing:0.45px;">s2-leaf2</div>
<svg style="left:0;top:0" width="3153" height="1725"><path d="M515,489.01 H3129 M515,555.22 H3129 M515,621.43 H3129 M515,687.64 H3129 M515,753.85 H3129 M515,820.06 H3129 M515,886.27 H3129 M515,952.48 H3129 M515,1018.69 H3129 M515,1084.90 H3129 M515,1151.11 H3129 M515,1217.32 H3129 M515,1283.53 H3129 M515,1349.74 H3129 M515,1415.95 H3129 M515,1482.16 H3129 M515,1548.37 H3129 M515,1614.58 H3129 M515,1680.79 H3129 M515,1747.00 H3129 " stroke="#d8d8d8" stroke-width="1.7" fill="none"/></svg>
<svg style="left:0;top:0" width="478" height="120">
<g fill="#fff"><circle cx="40.5" cy="65.5" r="14.8"/><circle cx="65.5" cy="58" r="21.6"/><circle cx="86" cy="68.5" r="12"/><rect x="40.5" y="60" width="45.5" height="20.3"/></g>
<g stroke="#26569b" stroke-width="1.8" fill="none"><path d="M35.1,66.6 L51.7,56.8 L69.8,47 L87.9,68.5 L60,71.9 L35.1,66.6 M51.7,56.8 L60,71.9 L69.8,47"/></g>
<g fill="#26569b"><circle cx="35.1" cy="66.6" r="3.9"/><circle cx="51.7" cy="56.8" r="3.9"/><circle cx="69.8" cy="47" r="3.9"/><circle cx="60" cy="71.9" r="3.9"/><circle cx="87.9" cy="68.5" r="3.9"/></g>
<g stroke="#fff" stroke-width="2.5" fill="none" stroke-linecap="round">
<path d="M135,50.6 A11.3,11.3 0 1 0 135,66.4"/>
<path d="M142.1,47.3 V69.8"/>
<circle cx="156.2" cy="62" r="7.6"/>
<path d="M169.5,54.2 V62.3 A6.75,7.4 0 0 0 183,62.3 V54.2 M183,62 V69.8"/>
<circle cx="198.2" cy="62" r="7.6"/><path d="M205.8,47.3 V69.8"/>
<path d="M214.9,47.3 L223.6,69.8 M226.6,63.3 L232.8,47.3"/>
<path d="M240.4,54.4 V69.8 M265.3,54.4 V69.8"/>
<path d="M258,56.6 C256.5,54 248.2,53.3 248.2,57.6 C248.2,62 257.9,60.5 257.9,65.5 C257.9,70.6 249,70.6 247.4,67.6"/>
<circle cx="280.5" cy="62" r="7.6"/>
<path d="M296.3,54.4 V69.8 M296.3,61.6 A6.2,7 0 0 1 308.5,61.6 V69.8"/>
</g>
<g fill="#fff"><circle cx="240.4" cy="48.6" r="1.6"/><circle cx="265.3" cy="48.6" r="1.6"/></g>
</svg>
<svg style="left:0;top:120" width="100" height="500"><g fill="none" stroke="#b5cdf1" stroke-width="3.3" stroke-linecap="round" stroke-linejoin="round" transform="translate(0,-120)">
<circle cx="40.8" cy="151" r="13.2"/><path d="M51,161.3 L59.8,170.1"/>
<circle cx="44.2" cy="326" r="14.3" stroke-width="3.4"/>
<path d="M29.4,340.2 L33.6,336.3 M59,340.2 L54.8,336.3" stroke-width="3.4"/>
<path d="M44.1,319.2 V326.4" stroke-width="3.6"/>
<path d="M27.5,30.3" />
<rect x="27.35" y="499.75" width="4.4" height="6.5" rx="1.3" stroke-width="2.7"/>
<rect x="36.95" y="490.65" width="4.4" height="15.6" rx="1.3" stroke-width="2.7"/>
<rect x="46.75" y="497.95" width="4.4" height="8.3" rx="1.3" stroke-width="2.7"/>
<rect x="56.35" y="490.65" width="4.7" height="15.6" rx="1.3" stroke-width="2.7"/>
<path d="M29.6,490.2 L39.3,480.6 L48.9,488.1 L59.4,480.6" stroke-width="2.3"/>
<rect x="38.4" y="564.3" width="11.5" height="8" rx="2.2" stroke-width="3"/>
<rect x="29.1" y="582.6" width="11.2" height="8" rx="2.2" stroke-width="3"/>
<rect x="47.6" y="582.6" width="11.5" height="8" rx="2.2" stroke-width="3"/>
<path d="M27.2,577.4 H61.2 M44.1,572.3 V577.4 M34.9,577.4 V582.6 M53.4,577.4 V582.6" stroke-width="2.6"/>
</g>
<g fill="#b5cdf1" transform="translate(0,-120)">
<circle cx="44.1" cy="333" r="2.5"/>
<path d="M26.8,315.6 A7.2,7.2 0 0 1 36.8,306.6 Z"/>
<path d="M61.6,315.6 A7.2,7.2 0 0 0 51.6,306.6 Z"/>
<circle cx="29.6" cy="490.2" r="2.5"/><circle cx="39.3" cy="480.6" r="2.5"/><circle cx="48.9" cy="488.1" r="2.1"/><circle cx="59.4" cy="480.6" r="2.5"/>
</g>
</svg>
<svg style="left:24.3px;top:388.3px" width="40" height="40" viewBox="0 0 24 24"><path d="M14.7 6.3a1 1 0 0 0 0 1.4l1.6 1.6a1 1 0 0 0 1.4 0l3.77-3.77a6 6 0 0 1-7.94 7.94l-6.91 6.91a2.12 2.12 0 0 1-3-3l6.91-6.91a6 6 0 0 1 7.94-7.94l-3.76 3.76z" fill="none" stroke="#b5cdf1" stroke-width="2.05" stroke-linecap="round" stroke-linejoin="round"/><circle cx="4.6" cy="19.4" r="0.6" fill="#b5cdf1"/></svg>
<svg style="left:0;top:215px" width="80" height="70"><g transform="translate(0,-215)">
<g fill="none" stroke="#fff" stroke-width="3.4"><rect x="27.7" y="224.5" width="33" height="10.5" rx="3.8"/><rect x="27.7" y="242.7" width="33" height="10.5" rx="3.8"/></g>
<g fill="#fff"><circle cx="50.9" cy="229.8" r="1.9"/><circle cx="55.5" cy="229.8" r="1.9"/><circle cx="50.9" cy="248.2" r="1.9"/><circle cx="55.5" cy="248.2" r="1.9"/></g>
<path d="M35.7,246.2 C37.3,246.2 38.4,247.3 38.5,249 L39.3,256.5 C39.6,254 41,252.9 42.4,253 C43.8,253.1 44.8,254 45.1,255.5 C45.5,253.8 46.8,253.2 48,253.4 C49.4,253.7 50.2,254.8 50.3,256.2 C50.9,255 52,254.9 52.8,255.2 C54.2,255.8 54.8,257.2 54.8,259 L54.5,265 C54.3,268 52,271 50.2,272.6 L50,274.2 L46.5,274.2 L45.6,271.8 L44.6,274.2 L38.6,274.2 L37.8,272.8 C35,268.5 31,263.5 28.6,260.5 C28,259.5 28.5,257.4 30.3,257.4 C31.8,257.4 33.5,258.8 35.4,261 L33.6,249.2 C33.5,247.4 34.5,246.2 35.7,246.2 Z" fill="#fff" stroke="#000" stroke-width="1.7" stroke-linejoin="round"/>
<path d="M41.4,262.6 V269 M45.2,262.6 V269 M48.8,262.6 V269" stroke="#111" stroke-width="1.4"/>
</g></svg>
<svg style="left:0;top:1560px" width="80" height="140"><g transform="translate(0,-1560)" fill="none" stroke="#b5cdf1" stroke-linecap="round" stroke-linejoin="round">
<rect x="29.6" y="1585.8" width="29.1" height="20" rx="4" stroke-width="3.2"/>
<path d="M36.7,1585.8 V1578.6 A7.5,7.5 0 0 1 51.6,1577.3" stroke-width="3.2"/>
<circle cx="44.2" cy="1673.6" r="12.7" stroke-width="3.6"/>
<path d="M57.70,1673.60 L60.50,1673.60 M55.89,1680.35 L58.32,1681.75 M50.95,1685.29 L52.35,1687.72 M44.20,1687.10 L44.20,1689.90 M37.45,1685.29 L36.05,1687.72 M32.51,1680.35 L30.08,1681.75 M30.70,1673.60 L27.90,1673.60 M32.51,1666.85 L30.08,1665.45 M37.45,1661.91 L36.05,1659.48 M44.20,1660.10 L44.20,1657.30 M50.95,1661.91 L52.35,1659.48 M55.89,1666.85 L58.32,1665.45 " stroke-width="4.4"/>
<path d="M44.2,1673.6 L56.70,1673.60 M44.2,1673.6 L37.95,1684.43 M44.2,1673.6 L37.95,1662.77 " stroke-width="2.6"/>
</g></svg>
<svg style="left:2900px;top:0" width="253" height="80"><g transform="translate(-2900,0)" fill="none" stroke-linecap="round" stroke-linejoin="round">
<circle cx="2965.4" cy="38.4" r="15.1" stroke="#3372c2" stroke-width="2.8"/>
<path d="M2961.3,34.7 C2961.9,32.3 2963.7,31.3 2965.7,31.3 C2968.2,31.3 2969.9,32.9 2969.9,34.9 C2969.9,36.9 2968.4,37.8 2967.2,38.8 C2966.1,39.8 2965.4,40.3 2965.3,41" stroke="#3372c2" stroke-width="3"/>
<circle cx="3027.4" cy="31.1" r="7.7" stroke="#222" stroke-width="3"/>
<path d="M3013,57.2 C3013,49.5 3019,45.5 3027.5,45.5 C3036,45.5 3042,49.5 3042,57.2 Z" stroke="#222" stroke-width="3"/>
</g><circle cx="65.2" cy="45.3" r="2.05" fill="#3372c2"/></svg>
<svg style="left:3000px;top:210px" width="120" height="40"><g transform="translate(-3000,-210)">
<g fill="#222"><circle cx="3010.6" cy="221.9" r="1.5"/><circle cx="3010.6" cy="229.8" r="1.5"/><circle cx="3010.6" cy="237.7" r="1.5"/></g>
<path d="M3015.8,221.9 H3033.6 M3015.8,229.8 H3033.6 M3015.8,237.7 H3033.6" stroke="#222" stroke-width="2.2"/>
<g fill="none" stroke="#4a4a4a" stroke-width="2.2"><rect x="3080.1" y="219.9" width="7.3" height="7.3" rx="1.5"/><rect x="3093.5" y="219.9" width="7.3" height="7.3" rx="1.5"/><rect x="3080.1" y="232.4" width="7.3" height="7.3" rx="1.5"/><rect x="3093.5" y="232.4" width="7.3" height="7.3" rx="1.5"/></g>
</g></svg>
<svg style="left:620px;top:310px" width="50" height="50"><path transform="translate(-620,-310)" d="M643.2,321.8 V343 M636.8,328 L643.2,321.6 L649.6,328" fill="none" stroke="#4b4b4d" stroke-width="2.6" stroke-linecap="round" stroke-linejoin="round"/></svg>
<svg style="left:0;top:0" width="330" height="100"><path d="M239.6,91.8 L246.6,81.4 L253.8,91.8 M243,88.2 H247.8 M256,91.8 V82 H263.3 C265.4,82 266.3,83 266.3,84.45 C266.3,85.9 265.4,86.9 263.3,86.9 H258.3 M260.2,86.9 L266.8,91.8 M271,81 V91.8 M285,82 H277 C275.3,82 274.4,83 274.4,84.3 C274.4,85.6 275.3,86.45 277,86.45 H282.4 C284.2,86.45 285.1,87.4 285.1,88.7 C285.1,90 284.2,90.85 282.4,90.85 H273.8 M286.2,82 H297 M291.6,82 V91.8 M295.2,91.8 L302.4,81.4 L309.6,91.8 M299.1,88.2 H303.7" fill="none" stroke="#fff" stroke-width="1.9"/></svg>
<div class="r" style="left:0;top:1716px;width:478px;height:9px;background:#7090c1"></div>
<div class="r" style="left:478px;top:1716px;width:364px;height:12px;border-radius:0 8px 0 0;background:rgba(212,222,237,0.58)"></div>
</body></html>
